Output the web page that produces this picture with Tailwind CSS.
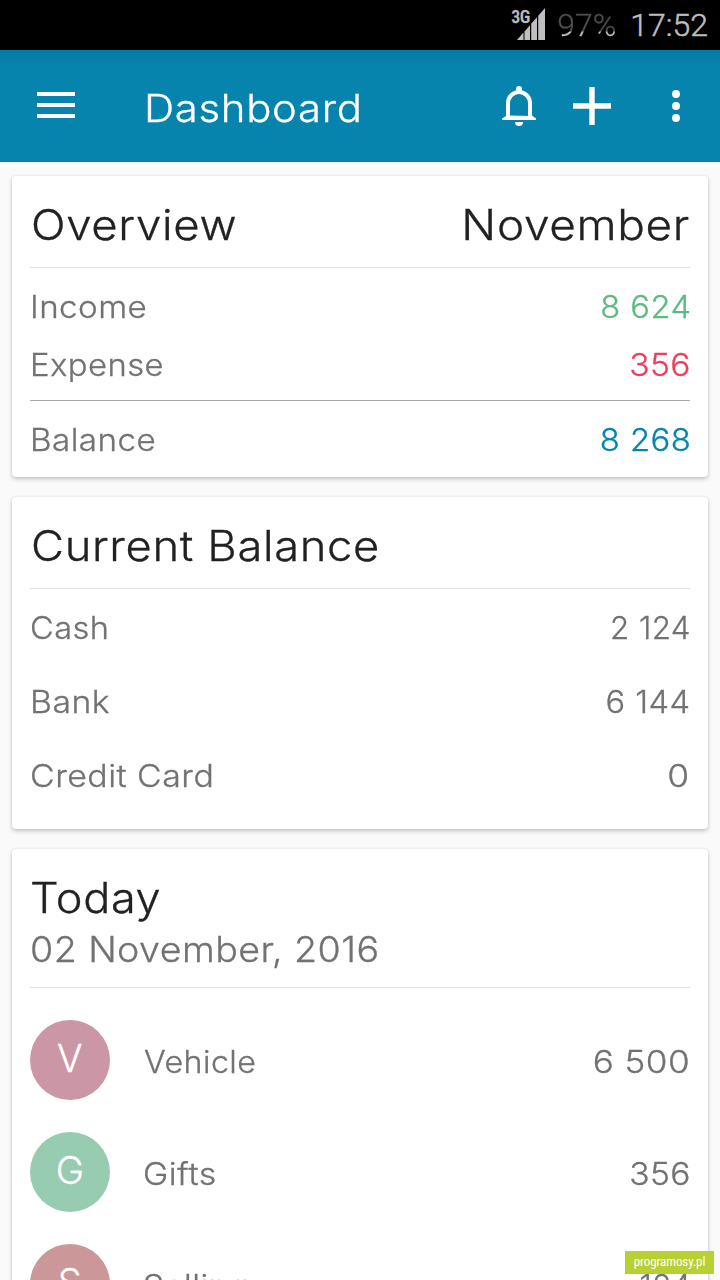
<!DOCTYPE html>
<html lang="en">
<head>
    <meta charset="UTF-8">
    <meta name="viewport" content="width=device-width, initial-scale=1.0">
    <title>Dashboard</title>
    <script src="https://cdn.jsdelivr.net/npm/@tailwindcss/browser@4"></script>
</head>
<body class="bg-[#fafafa]">
<div class="relative w-[720px] h-[1280px] overflow-hidden bg-[#fafafa] font-['Inter',sans-serif] font-light text-[31px] tracking-[0.4px] text-[#727272] [-webkit-text-stroke:0.3px]">

    <!-- status bar -->
    <div class="h-[50px] bg-black flex items-start justify-end pr-3 font-['Roboto',sans-serif] text-[32px] leading-[50px] tracking-normal text-[#bebebe]">
        <div class="relative w-[34px] h-[50px] mr-[12px]">
            <span class="absolute left-0 top-[6px] leading-[22px] text-[18px] font-medium font-['Roboto_Condensed',sans-serif] tracking-[-0.4px]">3G</span>
            <svg class="absolute left-0 top-0" width="34" height="50" viewBox="0 0 34 50" fill="#bebebe">
                <path d="M6 40L12.5 32.6V40zM13.5 31.4L19 25.2V40H13.5zM20.2 23.8L26 17.2V40H20.2zM27.2 15.8L34 8V40H27.2z"/>
            </svg>
        </div>
        <span class="h-[50px] text-transparent bg-clip-text bg-linear-to-b from-[#4d4d4d] from-62% to-[#bebebe] to-64%">97%</span>
        <span class="ml-[14px] [-webkit-text-stroke:0.5px]">17:52</span>
    </div>

    <!-- app bar -->
    <header class="h-[112px] bg-[#0684ae] bg-linear-to-b from-[#067ba3] to-[#0684ae] to-15% flex items-center text-white">
        <svg class="ml-[37px] mb-[2px]" width="38" height="26" viewBox="0 0 38 26" fill="#fff">
            <path d="M0 0h38v4H0zM0 11h38v4H0zM0 22h38v4H0z"/>
        </svg>
        <h1 class="ml-[69px] pt-[4px] text-[38px] leading-[50px] tracking-[0.6px] origin-left scale-x-[1.103]">Dashboard</h1>
        <div class="ml-auto flex items-center">
            <svg width="34" height="40" viewBox="0 0 34 40">
                <path d="M6 32V17a11 11 0 0 1 22 0V32" fill="none" stroke="#fff" stroke-width="4"/>
                <path d="M14 6V3a3 3 0 0 1 6 0V6zM4 29.5V30L0 32.500V34H34V32.500L30 29.5V30zM13 36h8a4 4 0 0 1-8 0z" fill="#fff"/>
            </svg>
            <svg class="ml-[37px]" width="38" height="38" viewBox="0 0 38 38" fill="#fff">
                <path d="M16.300 0h5.400v16.300H38v5.400H21.700V38h-5.400V21.700H0v-5.400h16.300z"/>
            </svg>
            <svg class="ml-[61px] mr-[40px]" width="8" height="32" viewBox="0 0 8 32" fill="#fff">
                <circle cx="4" cy="4" r="4"/>
                <circle cx="4" cy="16" r="4"/>
                <circle cx="4" cy="28" r="4"/>
            </svg>
        </div>
    </header>

    <main class="flex flex-col gap-5 px-3 pt-[14px]">

        <!-- overview -->
        <section class="h-[301px] rounded bg-white px-[18px] shadow-[0_2px_4px_rgba(0,0,0,0.22),0_0_3px_rgba(0,0,0,0.08)]">
            <div class="h-[92px] pt-[6px] border-b border-[#dedede] flex items-center justify-between text-[42px] tracking-[0.6px] text-[#212121]">
                <h2 class="ml-[1px] origin-left scale-x-[1.084]">Overview</h2>
                <h2 class="origin-right scale-x-[1.094]">November</h2>
            </div>
            <div class="pt-[10px] pb-[6px] border-b border-[#a8a8a8]">
                <div class="h-[58px] flex items-center justify-between">
                    <span class="origin-left scale-x-[1.07]">Income</span>
                    <span class="mr-[-1px] origin-right scale-x-[1.054] text-[#5dbb80]">8 624</span>
                </div>
                <div class="h-[58px] flex items-center justify-between">
                    <span class="origin-left scale-x-[1.059]">Expense</span>
                    <span class="mr-[-1px] origin-right scale-x-[1.085] text-[#ef3f5d]">356</span>
                </div>
            </div>
            <div class="h-[58px] mt-[10px] flex items-center justify-between">
                <span class="origin-left scale-x-[1.071]">Balance</span>
                <span class="mr-[-1px] origin-right scale-x-[1.062] text-[#0684ae]">8 268</span>
            </div>
        </section>

        <!-- current balance -->
        <section class="h-[332px] rounded bg-white px-[18px] shadow-[0_2px_4px_rgba(0,0,0,0.22),0_0_3px_rgba(0,0,0,0.08)]">
            <div class="h-[92px] pt-[6px] border-b border-[#dedede] flex items-center text-[42px] tracking-[0.6px] text-[#212121]">
                <h2 class="ml-[1px] origin-left scale-x-[1.079]">Current Balance</h2>
            </div>
            <div class="pt-[2px]">
                <div class="h-[74px] flex items-center justify-between">
                    <span class="origin-left scale-x-[1.052]">Cash</span>
                    <span class="mr-[-1px] origin-right scale-x-[1.012]">2 124</span>
                </div>
                <div class="h-[74px] flex items-center justify-between">
                    <span class="origin-left scale-x-[1.09]">Bank</span>
                    <span class="mr-[-1px] origin-right scale-x-[1.055]">6 144</span>
                </div>
                <div class="h-[74px] flex items-center justify-between">
                    <span class="origin-left scale-x-[1.095]">Credit Card</span>
                    <span class="origin-right scale-x-[1.14]">0</span>
                </div>
            </div>
        </section>

        <!-- today -->
        <section class="h-[520px] rounded bg-white px-[18px] shadow-[0_2px_4px_rgba(0,0,0,0.22),0_0_3px_rgba(0,0,0,0.08)]">
            <div class="h-[139px] pt-[21px] border-b border-[#dedede]">
                <h2 class="text-[42px] leading-[56px] tracking-[0.6px] text-[#212121] origin-left scale-x-[1.073]">Today</h2>
                <p class="text-[35px] leading-[46px] origin-left scale-x-[1.074]">02 November, 2016</p>
            </div>
            <div class="pt-[16px]">
                <div class="h-[112px] flex items-center">
                    <span class="size-[80px] rounded-full bg-[#cb96a6] text-white text-[38px] leading-[76px] text-center">V</span>
                    <span class="ml-[34px] pt-[4px] origin-left scale-x-[1.04]">Vehicle</span>
                    <span class="ml-auto pt-[4px] origin-right scale-x-[1.132]">6 500</span>
                </div>
                <div class="h-[112px] flex items-center">
                    <span class="size-[80px] rounded-full bg-[#97ccb0] text-white text-[38px] leading-[76px] text-center">G</span>
                    <span class="ml-[33px] pt-[4px] origin-left scale-x-[1.096]">Gifts</span>
                    <span class="ml-auto mr-[-1px] pt-[4px] origin-right scale-x-[1.085]">356</span>
                </div>
                <div class="h-[112px] flex items-center">
                    <span class="size-[80px] rounded-full bg-[#cc9799] text-white text-[38px] leading-[76px] text-center">S</span>
                    <span class="ml-[33px] pt-[5px] origin-left scale-x-[1.07]">Selling</span>
                    <span class="ml-auto mr-[-1px] pt-[5px] origin-right scale-x-[1.012]">124</span>
                </div>
            </div>
        </section>
    </main>

    <div class="absolute right-[6px] bottom-[6px] w-[89px] h-[23px] bg-[#b9d033] text-white text-center text-[13px] leading-[22px] font-normal font-['Roboto_Condensed',sans-serif] tracking-[-0.1px] [-webkit-text-stroke:0]">programosy.pl</div>
</div>
</body>
</html>
